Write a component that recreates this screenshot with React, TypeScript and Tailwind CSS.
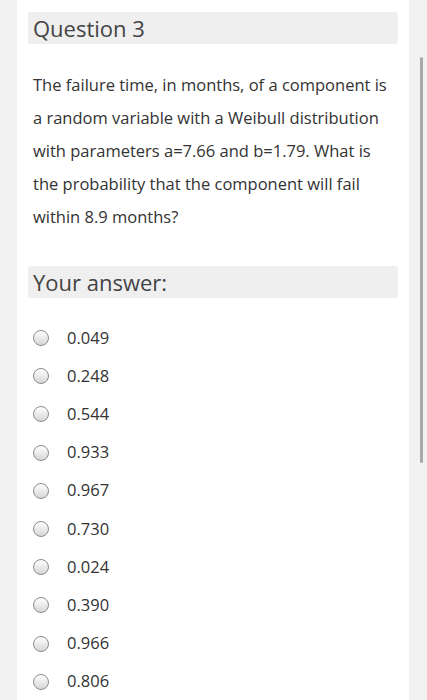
import React from "react";

const options = ["0.049", "0.248", "0.544", "0.933", "0.967", "0.730", "0.024", "0.390", "0.966", "0.806"];

function Radio() {
  return (
    <span className="block h-[16px] w-[16px] shrink-0 rounded-full border border-[#8c8c8c] bg-gradient-to-b from-[#ffffff] to-[#d6d6d6]" />
  );
}

export default function App() {
  return (
    <div
      className="flex h-[700px] w-[427px] overflow-hidden bg-[#f1f1f1] text-[#333333]"
      style={{ fontFamily: '"Open Sans", "Liberation Sans", sans-serif' }}
    >
      <div className="ml-[17px] w-[392px] shrink-0 bg-white px-[11px] pt-[12px]">
        {/* Question header */}
        <div className="h-[32px] rounded-[3px] bg-[#efefef] px-[5px] text-[22px] leading-[32px] text-[#444444]">
          Question 3
        </div>

        <p className="mt-[24px] w-[368px] px-[5px] text-[16.5px] leading-[33px]">
          The failure time, in months, of a component is a random variable with a Weibull distribution with
          parameters a=7.66 and b=1.79. What is the probability that the component will fail within 8.9 months?
        </p>

        {/* Answer header */}
        <div className="mt-[33px] h-[32px] rounded-[3px] bg-[#efefef] px-[5px] text-[22px] leading-[32px] text-[#444444]">
          Your answer:
        </div>

        <div className="mt-[21px] flex flex-col">
          {options.map((opt) => (
            <label key={opt} className="flex h-[38.2px] items-center gap-[18px] pl-[5px] text-[16.5px]">
              <Radio />
              <span>{opt}</span>
            </label>
          ))}
        </div>
      </div>

      {/* scrollbar */}
      <div className="flex w-[18px] shrink-0 pl-[11px] pt-[57px]">
        <div className="h-[406px] w-[3px] rounded-full bg-[#a9a9a9]" />
      </div>
    </div>
  );
}
